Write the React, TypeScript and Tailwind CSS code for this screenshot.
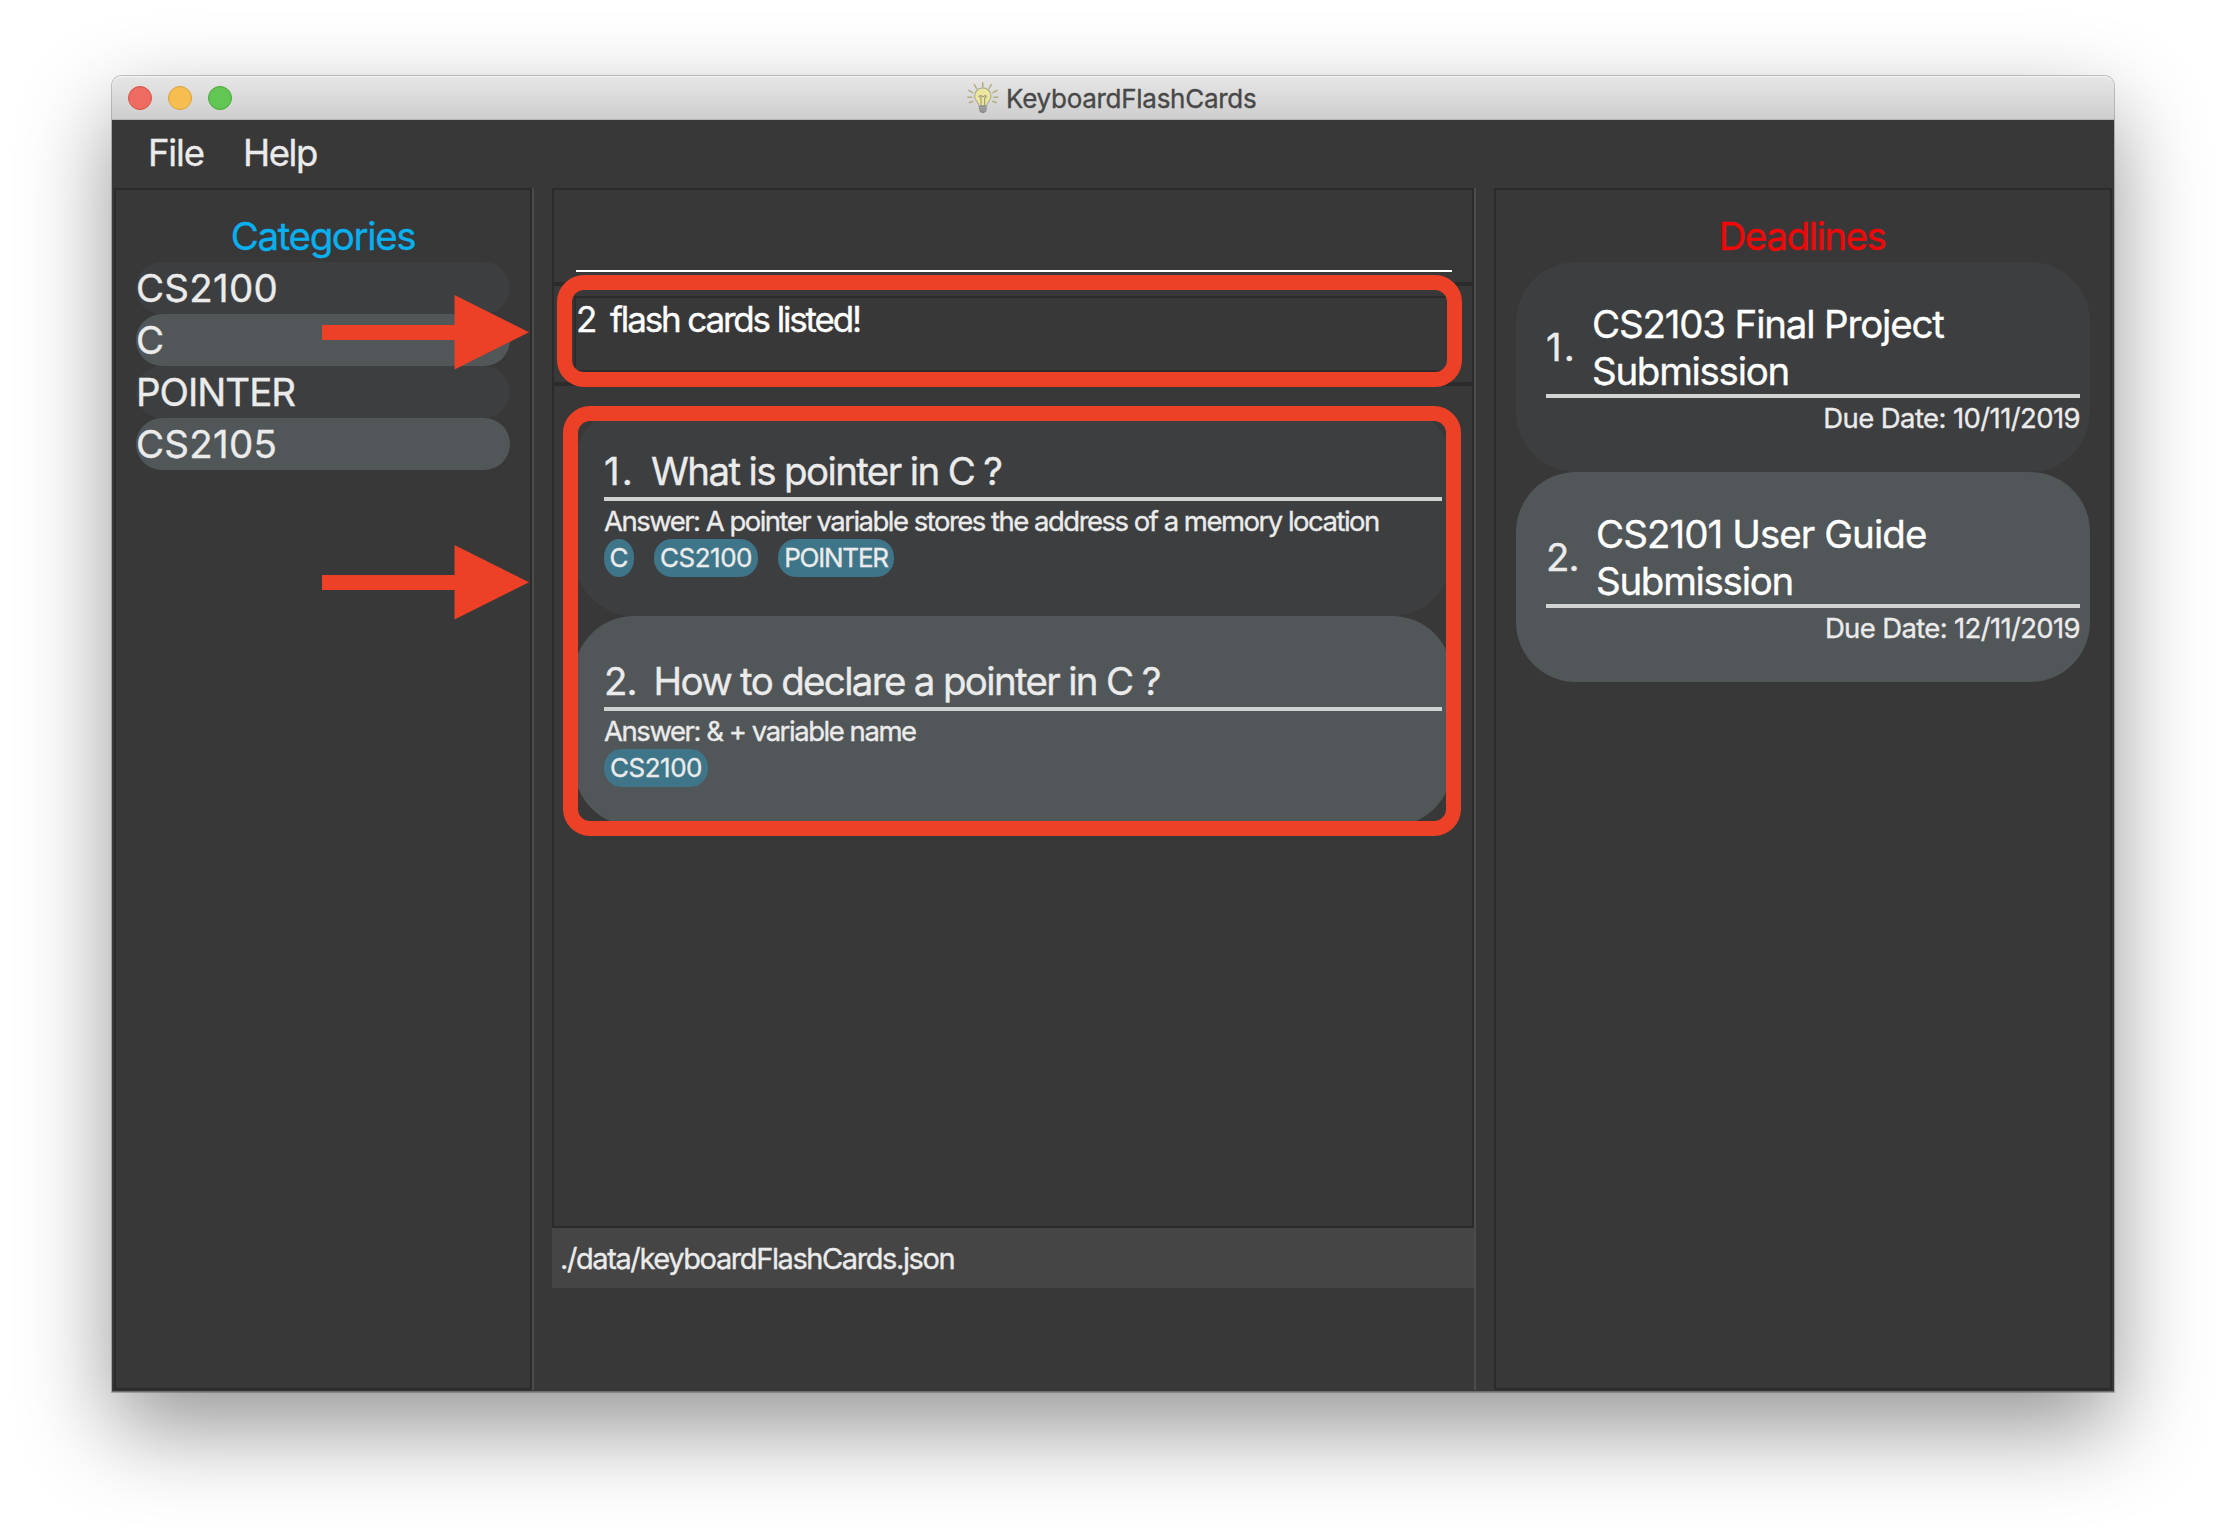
import type { ReactNode } from "react";

type Flashcard = { title: string; titleClass: string; index: string; indexClass: string; answer: string; answerClass: string; tags: string[] };

const categories = [
  { name: "CS2100", cls: "tracking-[0.25px]" },
  { name: "C", cls: "" },
  { name: "POINTER", cls: "tracking-[-1px]" },
  { name: "CS2105", cls: "tracking-[0.25px]" },
];

const cards: Flashcard[] = [
  {
    index: "1.",
    indexClass: "w-[48px] tracking-[2px]",
    title: "What is pointer in C ?",
    titleClass: "tracking-[-1.64px]",
    answer: "Answer: A pointer variable stores the address of a memory location",
    answerClass: "tracking-[-1.51px]",
    tags: ["C", "CS2100", "POINTER"],
  },
  {
    index: "2.",
    indexClass: "w-[50.500px] tracking-[-1px]",
    title: "How to declare a pointer in C ?",
    titleClass: "tracking-[-1.68px]",
    answer: "Answer: & + variable name",
    answerClass: "tracking-[-1.45px]",
    tags: ["CS2100"],
  },
];

const deadlines = [
  {
    index: "1.",
    indexClass: "w-[46px] tracking-[2px]",
    first: "CS2103 Final Project",
    firstClass: "tracking-[-1.18px]",
    due: "Due Date: 10/11/2019",
    dueClass: "tracking-[-0.6px]",
  },
  {
    index: "2.",
    indexClass: "w-[50px] tracking-[-1px]",
    first: "CS2101 User Guide",
    firstClass: "tracking-[-0.93px]",
    due: "Due Date: 12/11/2019",
    dueClass: "tracking-[-0.65px]",
  },
];

const tagClasses: Record<string, string> = {
  C: "w-[30px] rounded-[15px/18px]",
  CS2100: "w-[104px] rounded-[18px] tracking-[-0.5px]",
  POINTER: "w-[116px] rounded-[18px] tracking-[-1.24px]",
};

const stripe = (i: number) => (i % 2 === 0 ? "bg-[#3c3e3f]" : "bg-[#515658]");

function Bulb() {
  return (
    <svg className="h-8 w-8" viewBox="0 0 32 32" fill="none">
      <g stroke="#b5ae7c" strokeWidth="1.5" strokeLinecap="round">
        <path d="M15.8 0.800v4M7.300 2.600l2.200 3.900M24.300 2.600l-2.200 3.900M1.700 8.400l3.900 2.200M29.900 8.400l-3.900 2.200M0.800 15.200h4M26.800 15.200h4M2.300 20.800l3.500-1.600M29.300 20.800l-3.500-1.600" />
      </g>
      <path
        d="M15.8 5.900c-4.800 0-8.200 3.600-8.200 8 0 3.100 1.500 4.900 2.900 6.600 1 1.200 1.300 2 1.400 3.400h7.800c.1-1.400.4-2.200 1.400-3.400 1.400-1.700 2.900-3.500 2.900-6.600 0-4.400-3.400-8-8.200-8z"
        fill="#ece79c"
        stroke="#aaa995"
        strokeWidth="1.1"
      />
      <path d="M14 23.500v-7.500l-1.800-1.600 1.500-.9 2.100 1.400 2.100-1.400 1.500.9-1.800 1.600v7.500" stroke="#a39f7c" strokeWidth="1.200" />
      <path d="M11.900 23.600h7.800v4.200c0 1.600-1.900 3.400-3.900 3.400s-3.900-1.800-3.900-3.400z" fill="#8e8e8e" />
      <path d="M11.900 25.600h7.800M12.100 27.800h7.400" stroke="#b4b4b4" strokeWidth=".7" />
    </svg>
  );
}

function Arrow({ place }: { place: string }) {
  return (
    <svg className={`absolute left-[322px] h-[75px] w-[208px] ${place}`} viewBox="0 0 208 75" fill="#ec4127">
      <path d="M0 30h132.500V0L207 37.200 132.500 74.500V45H0z" />
    </svg>
  );
}

function SidePanel({ children, width }: { children: ReactNode; width: string }) {
  return <section className={`${width} h-[1202px] shrink-0 border-2 border-[#2b2b2b] px-5`}>{children}</section>;
}

function Divider({ gap }: { gap: string }) {
  return <div className={`h-[1202px] w-[2px] shrink-0 bg-[#4c4c4c] ${gap}`} />;
}

function CardView({ card, i }: { card: Flashcard; i: number }) {
  return (
    <article className={`h-[210px] rounded-[60px] pt-[42px] pr-[10px] pl-[30px] ${stripe(i)}`}>
      <div className="flex text-[38.5px] leading-[46px]">
        <span className={`shrink-0 ${card.indexClass}`}>{card.index}</span>
        <span className={`-ml-px ${card.titleClass}`}>{card.title}</span>
      </div>
      <div className="mt-[3px] h-1 bg-[#cfd2d1]" />
      <p className={`mt-1 text-[27.5px] leading-8 ${card.answerClass}`}>{card.answer}</p>
      <div className="mt-[2px] flex gap-5">
        {card.tags.map((t) => (
          <span key={t} className={`flex h-[38px] items-center justify-center bg-[#3e7589] pb-[2px] text-[26px] ${tagClasses[t]}`}>
            {t}
          </span>
        ))}
      </div>
    </article>
  );
}

export default function App() {
  return (
    <div className="relative h-[1540px] w-[2226px] overflow-hidden bg-white px-[112px] pt-[76px] font-['Inter',sans-serif] text-[#ebebeb] [-webkit-text-stroke:0.35px]">
      <div className="h-[1316px] w-[2002px] rounded-t-[10px] shadow-[0_0_0_1px_rgba(0,0,0,0.22),0_36px_90px_rgba(0,0,0,0.42)]">
        <header className="flex h-[44px] items-center rounded-t-[10px] border-t border-b border-t-[#f4f4f4] border-b-[#b4b4b4] bg-linear-to-b from-[#e6e6e6] to-[#cecece] pl-4">
          <div className="flex gap-4">
            <span className="h-6 w-6 rounded-full border border-[#d8524a] bg-[#ed6b60]" />
            <span className="h-6 w-6 rounded-full border border-[#dba23b] bg-[#f6be50]" />
            <span className="h-6 w-6 rounded-full border border-[#4ea73c] bg-[#62c655]" />
          </div>
          <div className="ml-[735px] flex items-center gap-[7px]">
            <Bulb />
            <span className="text-[26px] tracking-[-0.28px] text-[#484848]">KeyboardFlashCards</span>
          </div>
        </header>

        <main className="h-[1272px] border-b border-[#6c6c6c] bg-[#383838]">
          <nav className="flex h-[68px] items-center pb-px pl-[36px] text-[36.5px]">
            <span className="w-[95px] tracking-[-1.2px]">File</span>
            <span className="tracking-[-1.42px]">Help</span>
          </nav>

          <div className="flex px-[2px]">
            <SidePanel width="w-[418px]">
              <h2 className="mt-[23px] mb-[3px] text-center text-[38.5px] leading-[46px] tracking-[-1.4px] text-[#09b0ee]">Categories</h2>
              <ul>
                {categories.map((c, i) => (
                  <li key={c.name} className={`flex h-[52px] items-center rounded-[26px] pt-[2px] text-[38.5px] ${stripe(i)}`}>
                    <span className={c.cls}>{c.name}</span>
                  </li>
                ))}
              </ul>
            </SidePanel>
            <Divider gap="mr-[18px]" />

            <section className="w-[922px] shrink-0">
              <div className="flex h-[96px] flex-col justify-end border-2 border-[#2b2b2b] pr-5 pb-[10px] pl-[22px]">
                <div className="h-[2px] bg-white" />
              </div>
              <div className="h-[100px] border-2 border-[#2b2b2b] px-5 pt-[10px]">
                <p className="flex h-[76px] border-2 border-[#2b2b2b] text-[35px] leading-[42px] text-white">
                  <span className="w-[34px]">2</span>
                  <span className="tracking-[-2.15px]">flash cards listed!</span>
                </p>
              </div>
              <div className="h-[844px] border-2 border-[#2b2b2b] p-5">
                {cards.map((c, i) => (
                  <CardView key={c.index} card={c} i={i} />
                ))}
              </div>
              <footer className="flex h-[60px] items-center bg-[#454545] pt-[2px] pl-2 text-[29px] tracking-[-1.4px]">./data/keyboardFlashCards.json</footer>
            </section>
            <Divider gap="mr-[18px]" />

            <SidePanel width="w-[618px]">
              <h2 className="mt-[23px] mb-[3px] pr-[2px] text-center text-[38.5px] leading-[46px] tracking-[-1.45px] text-[#ee0808]">Deadlines</h2>
              {deadlines.map((d, i) => (
                <article key={d.index} className={`h-[210px] rounded-[60px] pt-[38px] pr-[10px] pl-[30px] ${stripe(i)}`}>
                  <div className="-mb-px flex items-center pt-px text-[38.5px] leading-[47px]">
                    <span className={`-mt-px shrink-0 ${d.indexClass}`}>{d.index}</span>
                    <p className="text-white">
                      <span className={`block ${d.firstClass}`}>{d.first}</span>
                      <span className="block tracking-[-1.3px]">Submission</span>
                    </p>
                  </div>
                  <div className="h-1 bg-[#d2d4d3]" />
                  <p className={`text-right text-[27.5px] leading-10 ${d.dueClass}`}>{d.due}</p>
                </article>
              ))}
            </SidePanel>
          </div>
        </main>
      </div>

      <Arrow place="top-[295px]" />
      <Arrow place="top-[545px]" />
      <div className="absolute top-[275px] left-[557px] h-[112px] w-[905px] rounded-[27px] border-[15px] border-[#ec4127]" />
      <div className="absolute top-[406px] left-[563px] h-[430px] w-[898px] rounded-[27px] border-[15px] border-[#ec4127]" />
    </div>
  );
}
